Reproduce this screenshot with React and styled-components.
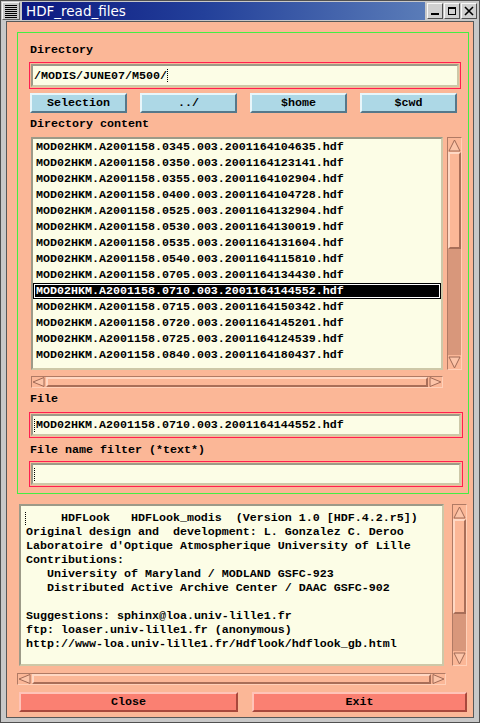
import React from "react";
import styled, { createGlobalStyle } from "styled-components";

const MONO = `"Liberation Mono", "DejaVu Sans Mono", monospace`;

const GlobalStyle = createGlobalStyle`
  html, body {
    margin: 0;
    padding: 0;
    background: #c4c4c4;
  }
  * { box-sizing: border-box; }
`;

const Window = styled.div`
  width: 480px;
  height: 723px;
  background: #c8c8c8;
  border: 1px solid #505050;
  display: flex;
  flex-direction: column;
`;

const TitleBar = styled.div`
  height: 19px;
  display: flex;
  align-items: stretch;
  padding: 1px 2px 0 1px;
  gap: 2px;
`;

const MenuButton = styled.div`
  width: 18px;
  border: 1px solid;
  border-color: #f4f4f4 #606060 #606060 #f4f4f4;
  background: repeating-linear-gradient(
    to bottom,
    #000 0px,
    #000 1px,
    #c8c8c8 1px,
    #c8c8c8 2px
  );
  background-size: 12px 13px;
  background-repeat: no-repeat;
  background-position: 2px 2px;
`;

const TitleText = styled.div`
  flex: 1;
  background: linear-gradient(to right, #0c1880 0%, #23409a 45%, #5a7cb8 100%);
  color: #fff;
  font-family: "DejaVu Sans", "Liberation Sans", sans-serif;
  font-size: 13.5px;
  line-height: 18px;
  padding-left: 4px;
`;

const WinButtons = styled.div`
  display: flex;
  gap: 1px;
  padding: 1px 0;
`;

const WinButton = styled.div`
  width: 16px;
  height: 16px;
  background: #d0d0d0;
  border: 1px solid;
  border-color: #f8f8f8 #505050 #505050 #f8f8f8;
  display: flex;
  align-items: center;
  justify-content: center;
`;

const Client = styled.div`
  margin: 1px 5px 4px 5px;
  flex: 1;
  background: #fbb797;
  border: 1px solid #585858;
  padding: 10px 6px 5px 10px;
  display: flex;
  flex-direction: column;
`;

const GreenFrame = styled.div`
  width: 452px;
  height: 462px;
  border: 1px solid #44ee44;
  padding: 0 0 6px 0;
  display: flex;
  flex-direction: column;
`;

const Label = styled.div`
  font-family: ${MONO};
  font-weight: bold;
  font-size: 11.67px;
  line-height: 14px;
  color: #000;
  margin-top: ${(p) => p.$top}px;
  padding-left: 12px;
  white-space: pre;
`;

const Field = styled.div`
  margin-top: ${(p) => p.$top}px;
  margin-left: 11px;
  width: ${(p) => p.$width}px;
  height: ${(p) => p.$height}px;
  border: 1px solid #ff1f4f;
  padding: 1px;
`;

const FieldInner = styled.div`
  height: 100%;
  background: #fcfde6;
  border: 2px solid;
  border-color: #9c9a88 #cdc8a8 #cdc8a8 #9c9a88;
  padding-left: 1px;
  display: flex;
  align-items: center;
  font-family: ${MONO};
  font-weight: bold;
  font-size: 11.67px;
  color: #000;
  white-space: pre;
`;

const Cursor = styled.span`
  display: inline-block;
  width: 2px;
  height: 13px;
  border-left: 1px dotted #000;
  margin-right: ${(p) => (p.$lead ? 0 : -2)}px;
`;

const ButtonRow = styled.div`
  margin-top: 4px;
  margin-left: 12px;
  display: flex;
  gap: 13px;
`;

const BlueButton = styled.div`
  width: 97px;
  height: 20px;
  background: #add8e6;
  border: 2px solid;
  border-color: #e8f6fa #56788a #56788a #e8f6fa;
  font-family: ${MONO};
  font-weight: bold;
  font-size: 11.67px;
  line-height: 16px;
  text-align: center;
  color: #000;
`;

const ListRow = styled.div`
  margin-top: ${(p) => p.$top}px;
  margin-left: ${(p) => p.$left}px;
  display: flex;
  gap: ${(p) => p.$gap}px;
  height: ${(p) => p.$height}px;
`;

const ListBox = styled.div`
  width: ${(p) => p.$width}px;
  height: 100%;
  background: #fcfde6;
  border: 2px solid;
  border-color: #9c9a88 #cdc8a8 #cdc8a8 #9c9a88;
  overflow: hidden;
  font-family: ${MONO};
  font-weight: bold;
  font-size: 11.67px;
  color: #000;
`;

const Item = styled.div`
  height: 16px;
  line-height: 16px;
  padding-left: 3px;
  white-space: pre;
  background: ${(p) => (p.$selected ? "#000" : "transparent")};
  color: ${(p) => (p.$selected ? "#fff" : "#000")};
  box-shadow: ${(p) => (p.$selected ? "inset 0 0 0 1px #000, inset 0 0 0 2px #fff" : "none")};
`;

const TextBody = styled.div`
  padding: 5px 0 0 5px;
  line-height: 14px;
  white-space: pre;
  position: relative;
`;

const TextCursor = styled.span`
  position: absolute;
  left: 4px;
  top: 6px;
  height: 13px;
  border-left: 1px dotted #000;
`;

const VScroll = styled.div`
  width: 15px;
  height: 100%;
  display: flex;
  flex-direction: column;
  background: #d8977b;
  border: 1px solid;
  border-color: #b07a64 #ffd0b8 #ffd0b8 #b07a64;
`;

const ScrollThumb = styled.div`
  background: #fbb797;
  border: 2px solid;
  border-color: #ffd8c4 #a86e58 #a86e58 #ffd8c4;
  ${(p) => (p.$length ? `height: ${p.$length}px;` : "flex: 1;")}
`;

const Spacer = styled.div`
  flex: 1;
`;

const ArrowBox = styled.div`
  width: ${(p) => (p.$horizontal ? 14 : 13)}px;
  height: ${(p) => (p.$horizontal ? 10 : 14)}px;
  flex: none;
  background: #fbb797;
  display: flex;
  align-items: center;
  justify-content: center;
`;

const HScroll = styled.div`
  margin-top: ${(p) => p.$top}px;
  margin-left: ${(p) => p.$left}px;
  width: ${(p) => p.$width}px;
  height: 12px;
  display: flex;
  background: #d8977b;
  border: 1px solid;
  border-color: #b07a64 #ffd0b8 #ffd0b8 #b07a64;
`;

const BottomButtons = styled.div`
  margin-top: 7px;
  margin-left: 2px;
  display: flex;
  gap: 14px;
`;

const SalmonButton = styled.div`
  width: ${(p) => p.$width}px;
  height: 20px;
  background: #fa8072;
  border: 2px solid;
  border-color: #ffc4b8 #a8483c #a8483c #ffc4b8;
  font-family: ${MONO};
  font-weight: bold;
  font-size: 11.67px;
  line-height: 16px;
  text-align: center;
  color: #000;
`;

const Arrow = ({ dir }) => {
  const pts = {
    up: "6.5,1 12,12 1,12",
    down: "1,1 12,1 6.5,12",
    left: "1,5 12,0.5 12,9.5",
    right: "13,5 2,0.5 2,9.5",
  }[dir];
  const horizontal = dir === "left" || dir === "right";
  return (
    <ArrowBox $horizontal={horizontal}>
      <svg width={horizontal ? 14 : 13} height={horizontal ? 10 : 13}>
        <polygon points={pts} fill="#fcc4a8" stroke="#a06a56" strokeWidth="1" />
      </svg>
    </ArrowBox>
  );
};

const files = [
  "MOD02HKM.A2001158.0345.003.2001164104635.hdf",
  "MOD02HKM.A2001158.0350.003.2001164123141.hdf",
  "MOD02HKM.A2001158.0355.003.2001164102904.hdf",
  "MOD02HKM.A2001158.0400.003.2001164104728.hdf",
  "MOD02HKM.A2001158.0525.003.2001164132904.hdf",
  "MOD02HKM.A2001158.0530.003.2001164130019.hdf",
  "MOD02HKM.A2001158.0535.003.2001164131604.hdf",
  "MOD02HKM.A2001158.0540.003.2001164115810.hdf",
  "MOD02HKM.A2001158.0705.003.2001164134430.hdf",
  "MOD02HKM.A2001158.0710.003.2001164144552.hdf",
  "MOD02HKM.A2001158.0715.003.2001164150342.hdf",
  "MOD02HKM.A2001158.0720.003.2001164145201.hdf",
  "MOD02HKM.A2001158.0725.003.2001164124539.hdf",
  "MOD02HKM.A2001158.0840.003.2001164180437.hdf",
];

const about = [
  "     HDFLook   HDFLook_modis  (Version 1.0 [HDF.4.2.r5])",
  "Original design and  development: L. Gonzalez C. Deroo",
  "Laboratoire d'Optique Atmospherique University of Lille",
  "Contributions:",
  "   University of Maryland / MODLAND GSFC-923",
  "   Distributed Active Archive Center / DAAC GSFC-902",
  " ",
  "Suggestions: sphinx@loa.univ-lille1.fr",
  "ftp: loaser.univ-lille1.fr (anonymous)",
  "http://www-loa.univ-lille1.fr/Hdflook/hdflook_gb.html",
];

const App = () => {
  return (
    <>
      <GlobalStyle />
      <Window>
        <TitleBar>
          <MenuButton />
          <TitleText>HDF_read_files</TitleText>
          <WinButtons>
            <WinButton>
              <svg width="10" height="10">
                <rect x="1" y="7" width="8" height="2" fill="#000" />
              </svg>
            </WinButton>
            <WinButton>
              <svg width="10" height="10">
                <rect x="1.5" y="1.5" width="7" height="7" fill="none" stroke="#000" />
                <rect x="1" y="1" width="8" height="2" fill="#000" />
              </svg>
            </WinButton>
            <WinButton>
              <svg width="10" height="10">
                <path d="M1 1 L9 9 M9 1 L1 9" stroke="#000" strokeWidth="1.6" />
              </svg>
            </WinButton>
          </WinButtons>
        </TitleBar>

        <Client>
          <GreenFrame>
            <Label $top={10}>Directory</Label>
            <Field $top={5} $width={432} $height={27}>
              <FieldInner>
                {"/MODIS/JUNE07/M500/"}
                <Cursor />
              </FieldInner>
            </Field>
            <ButtonRow>
              <BlueButton>Selection</BlueButton>
              <BlueButton>../</BlueButton>
              <BlueButton>$home</BlueButton>
              <BlueButton>$cwd</BlueButton>
            </ButtonRow>
            <Label $top={4}>Directory content</Label>
            <ListRow $top={6} $left={13} $gap={4} $height={233}>
              <ListBox $width={412}>
                {files.map((f, i) => (
                  <Item key={f} $selected={i === 9}>
                    {f}
                  </Item>
                ))}
              </ListBox>
              <VScroll>
                <Arrow dir="up" />
                <ScrollThumb $length={97} />
                <Spacer />
                <Arrow dir="down" />
              </VScroll>
            </ListRow>
            <HScroll $top={6} $left={13} $width={412}>
              <Arrow dir="left" />
              <ScrollThumb />
              <Arrow dir="right" />
            </HScroll>
            <Label $top={4}>File</Label>
            <Field $top={6} $width={434} $height={26}>
              <FieldInner>
                <Cursor $lead />
                {"MOD02HKM.A2001158.0710.003.2001164144552.hdf"}
              </FieldInner>
            </Field>
            <Label $top={5}>File name filter (*text*)</Label>
            <Field $top={4} $width={434} $height={26}>
              <FieldInner>
                <Cursor $lead />
              </FieldInner>
            </Field>
          </GreenFrame>

          <ListRow $top={10} $left={2} $gap={8} $height={162}>
            <ListBox $width={425}>
              <TextBody>
                <TextCursor />
                {about.join("\n")}
              </TextBody>
            </ListBox>
            <VScroll>
              <Arrow dir="up" />
              <ScrollThumb $length={95} />
              <Spacer />
              <Arrow dir="down" />
            </VScroll>
          </ListRow>
          <HScroll $top={7} $left={0} $width={429}>
            <Arrow dir="left" />
            <ScrollThumb />
            <Arrow dir="right" />
          </HScroll>

          <BottomButtons>
            <SalmonButton $width={219}>Close</SalmonButton>
            <SalmonButton $width={215}>Exit</SalmonButton>
          </BottomButtons>
        </Client>
      </Window>
    </>
  );
};

export default App;
